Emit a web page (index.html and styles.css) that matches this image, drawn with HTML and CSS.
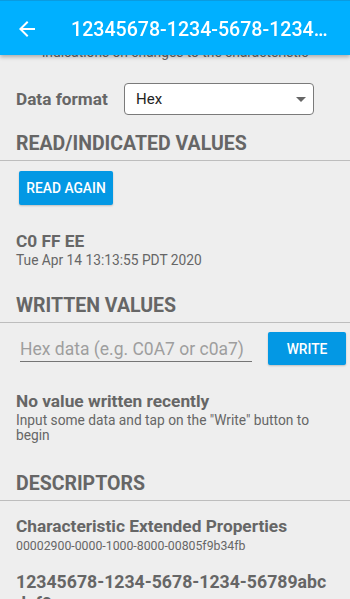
FILE: index.html
```html
<!DOCTYPE html>
<html>
<head>
<meta charset="utf-8">
<link rel="stylesheet" href="styles.css">
</head>
<body>
<header class="appbar">
  <svg class="back" viewBox="0 0 24 24" width="24" height="24"><path d="M20 11H7.83l5.59-5.59L12 4l-8 8 8 8 1.41-1.41L7.83 13H20v-2z" fill="#fff"/></svg>
  <div class="title">12345678-1234-5678-1234…</div>
</header>
<main class="content">
  <p class="hint">Indications on changes to the characteristic</p>
  <div class="format-row">
    <span class="format-label">Data format</span>
    <div class="select"><span>Hex</span><span class="caret"></span></div>
  </div>

  <h2 class="section section-read">READ/INDICATED VALUES</h2>
  <div class="pad"><button class="btn btn-read">READ AGAIN</button></div>
  <div class="pad value-block">
    <div class="value">C0 FF EE</div>
    <div class="sub">Tue Apr 14 13:13:55 PDT 2020</div>
  </div>

  <h2 class="section section-written">WRITTEN VALUES</h2>
  <div class="write-row">
    <input class="hex-input" type="text" placeholder="Hex data (e.g. C0A7 or c0a7)">
    <button class="btn btn-write">WRITE</button>
  </div>
  <div class="pad empty-block">
    <div class="value">No value written recently</div>
    <div class="desc">Input some data and tap on the "Write" button to begin</div>
  </div>

  <h2 class="section section-desc">DESCRIPTORS</h2>
  <div class="pad desc-item">
    <div class="value">Characteristic Extended Properties</div>
    <div class="uuid">00002900-0000-1000-8000-00805f9b34fb</div>
  </div>
  <div class="pad desc-item2">
    <div class="big">12345678-1234-5678-1234-56789abcdef0</div>
  </div>
</main>
</body>
</html>
```
FILE: styles.css
```css
* { box-sizing: border-box; }
html, body { margin: 0; padding: 0; }
body {
  background: #eeeeee;
  font-family: Roboto, "Noto Sans", sans-serif;
  color: #666666;
  width: 350px;
  height: 599px;
  overflow: hidden;
}
.appbar {
  position: fixed;
  top: 0; left: 0; right: 0;
  height: 55px;
  background: #00b0ff;
  border-top: 1px solid #0a9be0;
  display: flex;
  align-items: center;
  padding: 0 20px 0 15px;
  box-shadow: 0 2px 4px rgba(0,0,0,0.28);
  z-index: 10;
}
.back { flex: none; margin-top: 2px; }
.title {
  margin-left: 32px;
  color: #fff;
  font-size: 19.6px;
  font-weight: 500;
  white-space: nowrap;
  margin-top: 2px;
}
.content { padding-top: 43.5px; }
.hint {
  margin: 0;
  font-size: 13.75px;
  line-height: 16px;
  text-align: center;
  color: #666;
}
.pad { padding: 0 16px; }
.format-row {
  margin-top: 23.5px;
  padding: 0 16px;
  display: flex;
  align-items: center;
  height: 32px;
}
.format-label {
  font-size: 17.2px;
  font-weight: 700;
  width: 108px;
}
.select {
  width: 190px;
  height: 32px;
  background: #fff;
  border: 1px solid #7a7a7a;
  border-radius: 4px;
  display: flex;
  align-items: center;
  justify-content: space-between;
  padding: 0 7px 0 11px;
  color: #222;
  font-size: 15px;
}
.caret {
  width: 0; height: 0;
  border-left: 5px solid transparent;
  border-right: 5px solid transparent;
  border-top: 5px solid #666;
}
.section {
  margin: 0;
  font-size: 19.5px;
  font-weight: 700;
  line-height: 24px;
  padding: 0 16px 4px;
  border-bottom: 1px solid #bdbdbd;
}
.section-read { margin-top: 17px; }
.section-written { margin-top: 25px; }
.section-desc { margin-top: 29px; }
.btn {
  border: none;
  border-radius: 2px;
  background: #0398e4;
  color: #fff;
  font-family: Roboto, sans-serif;
  font-size: 13.8px;
  font-weight: 500;
  padding: 0;
  box-shadow: 0 1px 2px rgba(0,0,0,0.2);
}
.btn-read {
  margin-top: 10px;
  margin-left: 3px;
  width: 94px;
  height: 34px;
}
.value {
  font-size: 17.3px;
  font-weight: 700;
  line-height: 20px;
}
.sub {
  font-size: 13.75px;
  line-height: 18px;
}
.uuid {
  font-size: 12.3px;
  line-height: 18px;
  margin-top: 1px;
}
.value-block { margin-top: 26px; }
.write-row {
  margin-top: 9px;
  padding: 0 4px 0 20px;
  display: flex;
  align-items: flex-start;
  gap: 16px;
}
.hex-input {
  width: 232px;
  height: 30px;
  padding: 7px 0 2px;
  border: none;
  border-bottom: 1px solid #757575;
  background: transparent;
  font-family: Roboto, sans-serif;
  font-size: 17.5px;
  line-height: 20px;
  outline: none;
}
.hex-input::placeholder { color: #9e9e9e; }
.btn-write {
  width: 78px;
  height: 33px;
}
.empty-block { margin-top: 26px; }
.desc {
  margin-top: 2px;
  font-size: 13.75px;
  line-height: 15px;
}
.desc-item { margin-top: 15px; }
.desc-item2 { margin-top: 16px; }
.big {
  font-size: 17.7px;
  font-weight: 700;
  line-height: 22px;
  word-break: break-all;
}
```
